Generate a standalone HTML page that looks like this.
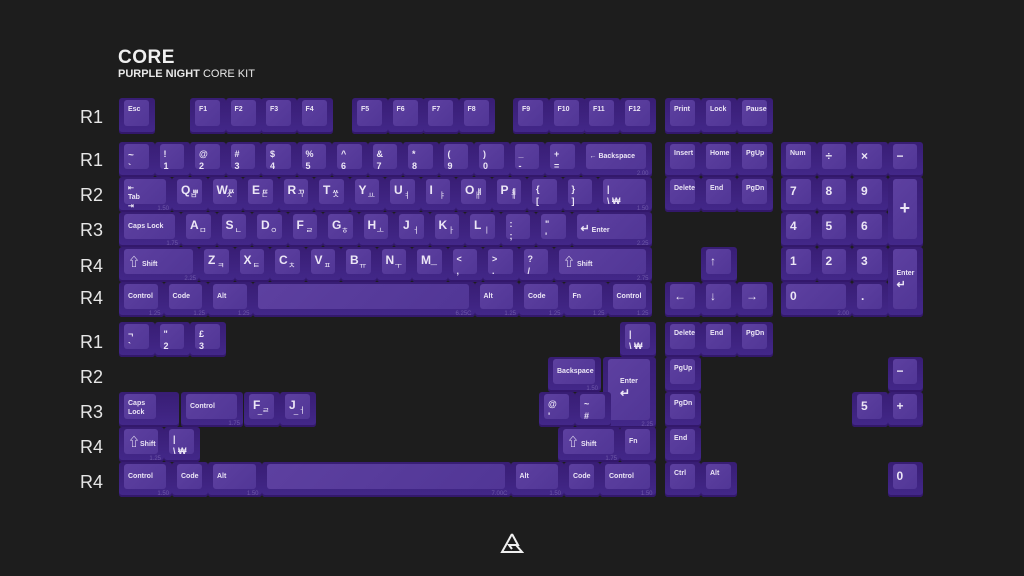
<!DOCTYPE html>
<html><head><meta charset="utf-8"><style>
body{margin:0;width:1024px;height:576px;background:#1d1d1d;position:relative;overflow:hidden;font-family:"Liberation Sans","Noto Sans CJK KR",sans-serif}
.k{position:absolute;height:35px;background:linear-gradient(#381d74,#43288a);border-radius:3px;box-shadow:inset 0 -2px 0 #33186b}
.k i{position:absolute;left:5px;right:6px;top:2px;bottom:8px;background:linear-gradient(135deg,#5d40a0,#513696);border-radius:3px;font-style:normal;color:#ece6f6;font-weight:bold;font-size:7px;padding:5px 0 0 4px;box-sizing:border-box;line-height:1.3;white-space:nowrap}
.k b{font-size:12px;line-height:1}
.k s{text-decoration:none;position:absolute;right:4px;bottom:3px;font-size:8px;font-weight:normal}
.k u{text-decoration:none;position:absolute;right:3px;bottom:0;font-size:6px;color:#6e58a8;font-weight:normal}
.t{height:70px}
.n i{font-size:12px}
.lb{position:absolute;left:80px;color:#e6e6e6;font-size:18px}
</style></head><body>
<div style="position:absolute;left:118px;top:47px;color:#f0f0f0;font-size:19px;font-weight:bold;letter-spacing:0.5px">CORE</div>
<div style="position:absolute;left:118px;top:68px;color:#e8e8e8;font-size:11px"><b>PURPLE NIGHT</b> CORE KIT</div>

<div class="lb" style="top:107px">R1</div><div class="lb" style="top:150px">R1</div><div class="lb" style="top:185px">R2</div><div class="lb" style="top:220px">R3</div><div class="lb" style="top:256px">R4</div><div class="lb" style="top:288px">R4</div>
<div class="lb" style="top:332px">R1</div><div class="lb" style="top:367px">R2</div><div class="lb" style="top:402px">R3</div><div class="lb" style="top:437px">R4</div><div class="lb" style="top:472px">R4</div>

<div class="k" style="left:119px;top:98px;width:36px;height:36px"><i>Esc</i></div>
<div class="k" style="left:190px;top:98px;width:36px;height:36px"><i>F1</i></div>
<div class="k" style="left:225.5px;top:98px;width:36px;height:36px"><i>F2</i></div>
<div class="k" style="left:261px;top:98px;width:36px;height:36px"><i>F3</i></div>
<div class="k" style="left:296.5px;top:98px;width:36px;height:36px"><i>F4</i></div>
<div class="k" style="left:352px;top:98px;width:36px;height:36px"><i>F5</i></div>
<div class="k" style="left:387.5px;top:98px;width:36px;height:36px"><i>F6</i></div>
<div class="k" style="left:423px;top:98px;width:36px;height:36px"><i>F7</i></div>
<div class="k" style="left:458.5px;top:98px;width:36px;height:36px"><i>F8</i></div>
<div class="k" style="left:513px;top:98px;width:36px;height:36px"><i>F9</i></div>
<div class="k" style="left:548.5px;top:98px;width:36px;height:36px"><i>F10</i></div>
<div class="k" style="left:584px;top:98px;width:36px;height:36px"><i>F11</i></div>
<div class="k" style="left:619.5px;top:98px;width:36px;height:36px"><i>F12</i></div>
<div class="k" style="left:665px;top:98px;width:36px;height:36px"><i>Print</i></div>
<div class="k" style="left:701px;top:98px;width:36px;height:36px"><i>Lock</i></div>
<div class="k" style="left:737px;top:98px;width:36px;height:36px"><i>Pause</i></div>

<div class="k" style="left:119px;top:142px;width:35.5px"><i style="font-size:10px">~<br>`</i></div>
<div class="k" style="left:154.5px;top:142px;width:35.5px"><i style="font-size:9px">!<br>1</i></div>
<div class="k" style="left:190px;top:142px;width:35.5px"><i style="font-size:9px">@<br>2</i></div>
<div class="k" style="left:225.5px;top:142px;width:35.5px"><i style="font-size:9px">#<br>3</i></div>
<div class="k" style="left:261px;top:142px;width:35.5px"><i style="font-size:9px">$<br>4</i></div>
<div class="k" style="left:296.5px;top:142px;width:35.5px"><i style="font-size:9px">%<br>5</i></div>
<div class="k" style="left:332px;top:142px;width:35.5px"><i style="font-size:9px">^<br>6</i></div>
<div class="k" style="left:367.5px;top:142px;width:35.5px"><i style="font-size:9px">&amp;<br>7</i></div>
<div class="k" style="left:403px;top:142px;width:35.5px"><i style="font-size:9px">*<br>8</i></div>
<div class="k" style="left:438.5px;top:142px;width:35.5px"><i style="font-size:9px">(<br>9</i></div>
<div class="k" style="left:474px;top:142px;width:35.5px"><i style="font-size:9px">)<br>0</i></div>
<div class="k" style="left:509.5px;top:142px;width:35.5px"><i style="font-size:9px">_<br>-</i></div>
<div class="k" style="left:545px;top:142px;width:35.5px"><i style="font-size:9px">+<br>=</i></div>
<div class="k" style="left:580.5px;top:142px;width:71px"><i style="padding-top:8px">← Backspace</i><u>2.00</u></div>
<div class="k" style="left:665px;top:142px;width:36px"><i>Insert</i></div>
<div class="k" style="left:701px;top:142px;width:36px"><i>Home</i></div>
<div class="k" style="left:737px;top:142px;width:36px"><i>PgUp</i></div>
<div class="k" style="left:781px;top:142px;width:35.5px"><i>Num</i></div>
<div class="k n" style="left:816.5px;top:142px;width:35.5px"><i>÷</i></div>
<div class="k n" style="left:852px;top:142px;width:35.5px"><i>×</i></div>
<div class="k n" style="left:887.5px;top:142px;width:35.5px"><i>−</i></div>

<div class="k" style="left:119px;top:177px;width:53px"><i>⇤<br>Tab<br>⇥</i><u>1.50</u></div>
<div class="k" style="left:172px;top:177px;width:35.5px"><i><b>Q</b> ㅃ<s>ㅂ</s></i></div>
<div class="k" style="left:207.5px;top:177px;width:35.5px"><i><b>W</b>ㅉ<s>ㅈ</s></i></div>
<div class="k" style="left:243px;top:177px;width:35.5px"><i><b>E</b> ㄸ<s>ㄷ</s></i></div>
<div class="k" style="left:278.5px;top:177px;width:35.5px"><i><b>R</b> ㄲ<s>ㄱ</s></i></div>
<div class="k" style="left:314px;top:177px;width:35.5px"><i><b>T</b> ㅆ<s>ㅅ</s></i></div>
<div class="k" style="left:349.5px;top:177px;width:35.5px"><i><b>Y</b><s>ㅛ</s></i></div>
<div class="k" style="left:385px;top:177px;width:35.5px"><i><b>U</b><s>ㅕ</s></i></div>
<div class="k" style="left:420.5px;top:177px;width:35.5px"><i><b>I</b><s>ㅑ</s></i></div>
<div class="k" style="left:456px;top:177px;width:35.5px"><i><b>O</b> ㅒ<s>ㅐ</s></i></div>
<div class="k" style="left:491.5px;top:177px;width:35.5px"><i><b>P</b> ㅖ<s>ㅔ</s></i></div>
<div class="k" style="left:527px;top:177px;width:35.5px"><i style="font-size:9px">{<br>[</i></div>
<div class="k" style="left:562.5px;top:177px;width:35.5px"><i style="font-size:9px">}<br>]</i></div>
<div class="k" style="left:598px;top:177px;width:53.5px"><i style="font-size:9px">|<br>\ ₩</i><u>1.50</u></div>
<div class="k" style="left:665px;top:177px;width:36px"><i>Delete</i></div>
<div class="k" style="left:701px;top:177px;width:36px"><i>End</i></div>
<div class="k" style="left:737px;top:177px;width:36px"><i>PgDn</i></div>
<div class="k n" style="left:781px;top:177px;width:35.5px"><i>7</i></div>
<div class="k n" style="left:816.5px;top:177px;width:35.5px"><i>8</i></div>
<div class="k n" style="left:852px;top:177px;width:35.5px"><i>9</i></div>
<div class="k t n" style="left:887.5px;top:177px;width:35.5px"><i style="font-size:18px;padding:18px 0 0 7px">+</i></div>

<div class="k" style="left:119px;top:212px;width:62px"><i style="padding-top:8px">Caps Lock</i><u>1.75</u></div>
<div class="k" style="left:181px;top:212px;width:35.5px"><i><b>A</b><s>ㅁ</s></i></div>
<div class="k" style="left:216.5px;top:212px;width:35.5px"><i><b>S</b><s>ㄴ</s></i></div>
<div class="k" style="left:252px;top:212px;width:35.5px"><i><b>D</b><s>ㅇ</s></i></div>
<div class="k" style="left:287.5px;top:212px;width:35.5px"><i><b>F</b><s>ㄹ</s></i></div>
<div class="k" style="left:323px;top:212px;width:35.5px"><i><b>G</b><s>ㅎ</s></i></div>
<div class="k" style="left:358.5px;top:212px;width:35.5px"><i><b>H</b><s>ㅗ</s></i></div>
<div class="k" style="left:394px;top:212px;width:35.5px"><i><b>J</b><s>ㅓ</s></i></div>
<div class="k" style="left:429.5px;top:212px;width:35.5px"><i><b>K</b><s>ㅏ</s></i></div>
<div class="k" style="left:465px;top:212px;width:35.5px"><i><b>L</b><s>ㅣ</s></i></div>
<div class="k" style="left:500.5px;top:212px;width:35.5px"><i style="font-size:9px">:<br>;</i></div>
<div class="k" style="left:536px;top:212px;width:35.5px"><i style="font-size:9px">"<br>'</i></div>
<div class="k" style="left:571.5px;top:212px;width:80px"><i style="padding-top:8px"><span style="font-size:11px">↵</span> Enter</i><u>2.25</u></div>
<div class="k n" style="left:781px;top:212px;width:35.5px"><i>4</i></div>
<div class="k n" style="left:816.5px;top:212px;width:35.5px"><i>5</i></div>
<div class="k n" style="left:852px;top:212px;width:35.5px"><i>6</i></div>

<div class="k" style="left:119px;top:247px;width:80px"><i style="padding-top:6px"><span style="font-size:12px">⇧</span> Shift</i><u>2.25</u></div>
<div class="k" style="left:199px;top:247px;width:35.5px"><i><b>Z</b><s>ㅋ</s></i></div>
<div class="k" style="left:234.5px;top:247px;width:35.5px"><i><b>X</b><s>ㅌ</s></i></div>
<div class="k" style="left:270px;top:247px;width:35.5px"><i><b>C</b><s>ㅊ</s></i></div>
<div class="k" style="left:305.5px;top:247px;width:35.5px"><i><b>V</b><s>ㅍ</s></i></div>
<div class="k" style="left:341px;top:247px;width:35.5px"><i><b>B</b><s>ㅠ</s></i></div>
<div class="k" style="left:376.5px;top:247px;width:35.5px"><i><b>N</b><s>ㅜ</s></i></div>
<div class="k" style="left:412px;top:247px;width:35.5px"><i><b>M</b><s>ㅡ</s></i></div>
<div class="k" style="left:447.5px;top:247px;width:35.5px"><i style="font-size:9px">&lt;<br>,</i></div>
<div class="k" style="left:483px;top:247px;width:35.5px"><i style="font-size:9px">&gt;<br>.</i></div>
<div class="k" style="left:518.5px;top:247px;width:35.5px"><i style="font-size:9px">?<br>/</i></div>
<div class="k" style="left:554px;top:247px;width:97.5px"><i style="padding-top:6px"><span style="font-size:12px">⇧</span> Shift</i><u>2.75</u></div>
<div class="k n" style="left:701px;top:247px;width:36px"><i>↑</i></div>
<div class="k n" style="left:781px;top:247px;width:35.5px"><i>1</i></div>
<div class="k n" style="left:816.5px;top:247px;width:35.5px"><i>2</i></div>
<div class="k n" style="left:852px;top:247px;width:35.5px"><i>3</i></div>
<div class="k t" style="left:887.5px;top:247px;width:35.5px"><i style="padding-top:20px">Enter<br><span style="font-size:11px">↵</span></i></div>

<div class="k" style="left:119px;top:282px;width:44.5px"><i style="padding-top:8px">Control</i><u>1.25</u></div>
<div class="k" style="left:163.5px;top:282px;width:44.5px"><i style="padding-top:8px">Code</i><u>1.25</u></div>
<div class="k" style="left:208px;top:282px;width:44.5px"><i style="padding-top:8px">Alt</i><u>1.25</u></div>
<div class="k" style="left:252.5px;top:282px;width:222px"><i></i><u>6.25C</u></div>
<div class="k" style="left:474.5px;top:282px;width:44.5px"><i style="padding-top:8px">Alt</i><u>1.25</u></div>
<div class="k" style="left:519px;top:282px;width:44.5px"><i style="padding-top:8px">Code</i><u>1.25</u></div>
<div class="k" style="left:563.5px;top:282px;width:44px"><i style="padding-top:8px">Fn</i><u>1.25</u></div>
<div class="k" style="left:607.5px;top:282px;width:44px"><i style="padding-top:8px">Control</i><u>1.25</u></div>
<div class="k n" style="left:665px;top:282px;width:36px"><i>←</i></div>
<div class="k n" style="left:701px;top:282px;width:36px"><i>↓</i></div>
<div class="k n" style="left:737px;top:282px;width:36px"><i>→</i></div>
<div class="k n" style="left:781px;top:282px;width:71px"><i>0</i><u>2.00</u></div>
<div class="k n" style="left:852px;top:282px;width:35.5px"><i>.</i></div>

<div class="k" style="left:119px;top:322px;width:35.5px"><i style="font-size:9px">¬<br>`</i></div>
<div class="k" style="left:154.5px;top:322px;width:35.5px"><i style="font-size:9px">"<br>2</i></div>
<div class="k" style="left:190px;top:322px;width:35.5px"><i style="font-size:9px">£<br>3</i></div>
<div class="k" style="left:620px;top:322px;width:35.5px"><i style="font-size:9px">|<br>\ ₩</i></div>
<div class="k" style="left:665px;top:322px;width:36px"><i>Delete</i></div>
<div class="k" style="left:701px;top:322px;width:36px"><i>End</i></div>
<div class="k" style="left:737px;top:322px;width:36px"><i>PgDn</i></div>

<div class="k" style="left:548px;top:357px;width:53px"><i style="padding-top:8px">Backspace</i><u>1.50</u></div>
<div class="k" style="left:603px;top:357px;width:53px;height:71px"><i style="padding:18px 0 0 12px">Enter<br><span style="font-size:12px">↵</span></i><u>2.25</u></div>
<div class="k" style="left:665px;top:357px;width:36px"><i>PgUp</i></div>
<div class="k n" style="left:887.5px;top:357px;width:35.5px"><i>−</i></div>

<div class="k" style="left:119px;top:392px;width:60px"><i style="right:23px">Caps<br>Lock</i></div>
<div class="k" style="left:181px;top:392px;width:62px"><i style="padding-top:8px">Control</i><u>1.75</u></div>
<div class="k" style="left:244px;top:392px;width:35.5px"><i><b>F</b><s>_ㄹ</s></i></div>
<div class="k" style="left:280px;top:392px;width:35.5px"><i><b>J</b><s>_ㅓ</s></i></div>
<div class="k" style="left:539px;top:392px;width:36px"><i style="font-size:9px">@<br>'</i></div>
<div class="k" style="left:575px;top:392px;width:36px"><i style="font-size:9px">~<br>#</i></div>
<div class="k" style="left:665px;top:392px;width:36px"><i>PgDn</i></div>
<div class="k n" style="left:852px;top:392px;width:35.5px"><i>5</i></div>
<div class="k n" style="left:887.5px;top:392px;width:35.5px"><i>+</i></div>

<div class="k" style="left:119px;top:427px;width:45px"><i style="padding-top:6px"><span style="font-size:12px">⇧</span>Shift</i><u>1.25</u></div>
<div class="k" style="left:164px;top:427px;width:35.5px"><i style="font-size:9px">|<br>\ ₩</i></div>
<div class="k" style="left:558px;top:427px;width:62px"><i style="padding-top:6px"><span style="font-size:12px">⇧</span> Shift</i><u>1.75</u></div>
<div class="k" style="left:620px;top:427px;width:35.5px"><i style="padding-top:8px">Fn</i></div>
<div class="k" style="left:665px;top:427px;width:36px"><i>End</i></div>

<div class="k" style="left:119px;top:462px;width:53px"><i style="padding-top:8px">Control</i><u>1.50</u></div>
<div class="k" style="left:172px;top:462px;width:36px"><i style="padding-top:8px">Code</i></div>
<div class="k" style="left:208px;top:462px;width:53.5px"><i style="padding-top:8px">Alt</i><u>1.50</u></div>
<div class="k" style="left:261.5px;top:462px;width:249px"><i></i><u>7.00C</u></div>
<div class="k" style="left:510.5px;top:462px;width:53.5px"><i style="padding-top:8px">Alt</i><u>1.50</u></div>
<div class="k" style="left:564px;top:462px;width:36px"><i style="padding-top:8px">Code</i></div>
<div class="k" style="left:600px;top:462px;width:55.5px"><i style="padding-top:8px">Control</i><u>1.50</u></div>
<div class="k" style="left:665px;top:462px;width:36px"><i>Ctrl</i></div>
<div class="k" style="left:701px;top:462px;width:36px"><i>Alt</i></div>
<div class="k n" style="left:887.5px;top:462px;width:35.5px"><i>0</i></div>

<svg style="position:absolute;left:500px;top:532px" width="24" height="22" viewBox="0 0 24 22">
<path d="M12 2 L2 20 L22 20 L16 13 M12 2 L18 13 L9 13 L12 17" fill="none" stroke="#f0f0f0" stroke-width="2" stroke-linejoin="miter"/>
</svg>
</body></html>
